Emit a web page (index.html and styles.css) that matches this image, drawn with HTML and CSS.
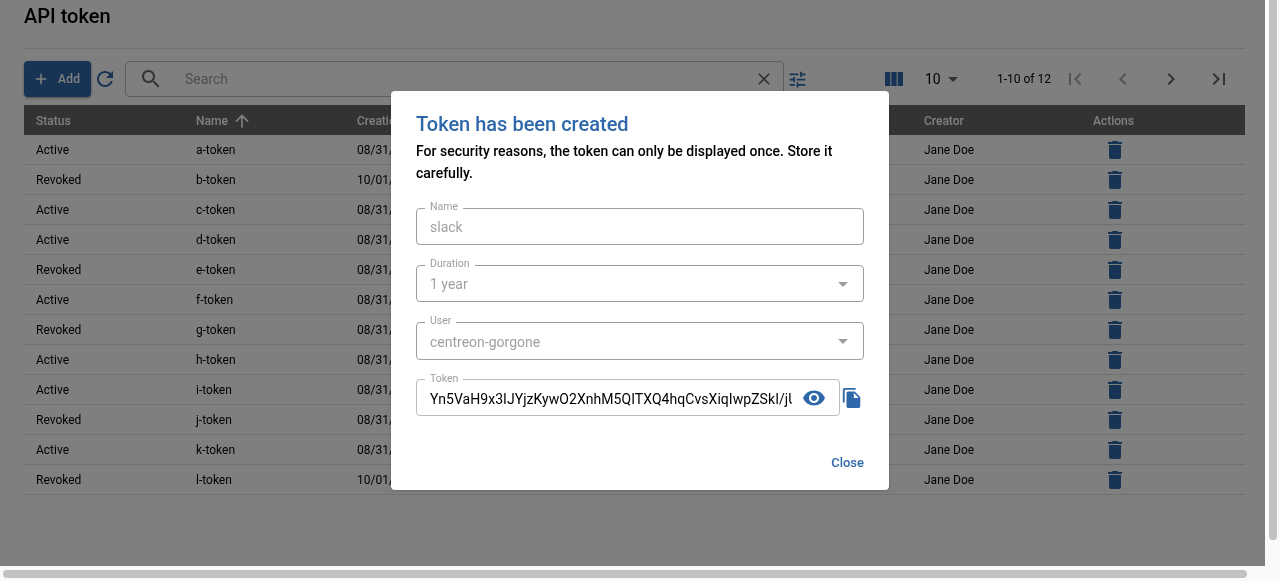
FILE: index.html
```html
<!DOCTYPE html>
<html lang="en">
<head>
    <meta charset="UTF-8">
    <meta name="viewport" content="width=device-width, initial-scale=1.0">
    <title>API token</title>
    <link rel="stylesheet" href="styles.css">
</head>
<body>
    <svg class="sprite" width="0" height="0">
        <symbol id="i-delete" viewBox="0 0 24 24"><path d="M6 19c0 1.1.9 2 2 2h8c1.1 0 2-.9 2-2V7H6v12zM19 4h-3.5l-1-1h-5l-1 1H5v2h14V4z"/></symbol>
        <symbol id="i-drop" viewBox="0 0 24 24"><path d="M7 10l5 5 5-5z"/></symbol>
    </svg>

    <main class="page">
        <h1 class="page-title">API token</h1>

        <div class="toolbar">
            <button class="add-btn" type="button">
                <svg class="icon-add" viewBox="0 0 24 24"><path d="M19 13h-6v6h-2v-6H5v-2h6V5h2v6h6v2z"/></svg>
                Add
            </button>
            <svg class="icon primary refresh" viewBox="0 0 24 24"><path d="M17.65 6.35C16.2 4.9 14.21 4 12 4c-4.42 0-7.99 3.58-7.99 8s3.57 8 7.99 8c3.73 0 6.84-2.55 7.73-6h-2.08c-.82 2.33-3.04 4-5.65 4-3.31 0-6-2.69-6-6s2.69-6 6-6c1.66 0 3.14.69 4.22 1.78L13 11h7V4l-2.35 2.35z"/></svg>
            <div class="search">
                <svg class="icon dark" viewBox="0 0 24 24"><path d="M15.5 14h-.79l-.28-.27C15.41 12.59 16 11.11 16 9.5 16 5.91 13.09 3 9.5 3S3 5.91 3 9.5 5.91 16 9.5 16c1.61 0 3.09-.59 4.23-1.57l.27.28v.79l5 4.99L20.49 19l-4.99-5zm-6 0C7.01 14 5 11.99 5 9.5S7.01 5 9.5 5 14 7.01 14 9.5 11.99 14 9.5 14z"/></svg>
                <span class="search-text">Search</span>
                <svg class="icon dark clear" viewBox="0 0 24 24"><path d="M19 6.41 17.59 5 12 10.59 6.41 5 5 6.41 10.59 12 5 17.59 6.41 19 12 13.41 17.59 19 19 17.59 13.41 12z"/></svg>
            </div>
            <svg class="icon primary tune" viewBox="0 0 24 24"><path d="M3 17v2h6v-2H3zM3 5v2h10V5H3zm10 16v-2h8v-2h-8v-2h-2v6h2zM7 9v2H3v2h4v2h2V9H7zm14 4v-2H11v2h10zm-6-4h2V7h4V5h-4V3h-2v6z"/></svg>
            <svg class="icon primary columns" viewBox="0 0 24 24"><path d="M14.67 5v14H9.33V5h5.34zm1 14H21V5h-5.33v14zm-7.34 0V5H3v14h5.33z"/></svg>
            <div class="page-size">10 <svg class="icon dark" viewBox="0 0 24 24"><use href="#i-drop"/></svg></div>
            <div class="page-count">1-10 of 12</div>
            <div class="pager">
                <svg class="icon muted" viewBox="0 0 24 24"><path d="M18.41 16.59 13.82 12l4.59-4.59L17 6l-6 6 6 6zM6 6h2v12H6z"/></svg>
                <svg class="icon muted" viewBox="0 0 24 24"><path d="M15.41 7.41 14 6l-6 6 6 6 1.41-1.41L10.83 12z"/></svg>
                <svg class="icon dark" viewBox="0 0 24 24"><path d="M10 6 8.59 7.41 13.17 12l-4.58 4.59L10 18l6-6z"/></svg>
                <svg class="icon dark" viewBox="0 0 24 24"><path d="M5.59 7.41 10.18 12l-4.59 4.59L7 18l6-6-6-6zM16 6h2v12h-2z"/></svg>
            </div>
        </div>

        <table class="token-table">
            <thead>
                <tr>
                    <th class="col-status">Status</th>
                    <th class="col-name">Name <svg class="sort-icon" viewBox="0 0 24 24"><path d="M4 12l1.41 1.41L11 7.83V20h2V7.83l5.58 5.59L20 12l-8-8-8 8z"/></svg></th>
                    <th>Creation date</th>
                    <th>Expiration date</th>
                    <th>User</th>
                    <th class="col-creator">Creator</th>
                    <th class="col-actions">Actions</th>
                </tr>
            </thead>
            <tbody>
                <tr><td>Active</td><td>a-token</td><td>08/31/2024</td><td>08/31/2025</td><td>John Doe</td><td>Jane Doe</td><td class="del"><svg class="icon primary" viewBox="0 0 24 24"><use href="#i-delete"/></svg></td></tr>
                <tr><td>Revoked</td><td>b-token</td><td>10/01/2024</td><td>10/01/2025</td><td>John Doe</td><td>Jane Doe</td><td class="del"><svg class="icon primary" viewBox="0 0 24 24"><use href="#i-delete"/></svg></td></tr>
                <tr><td>Active</td><td>c-token</td><td>08/31/2024</td><td>08/31/2025</td><td>John Doe</td><td>Jane Doe</td><td class="del"><svg class="icon primary" viewBox="0 0 24 24"><use href="#i-delete"/></svg></td></tr>
                <tr><td>Active</td><td>d-token</td><td>08/31/2024</td><td>08/31/2025</td><td>John Doe</td><td>Jane Doe</td><td class="del"><svg class="icon primary" viewBox="0 0 24 24"><use href="#i-delete"/></svg></td></tr>
                <tr><td>Revoked</td><td>e-token</td><td>08/31/2024</td><td>08/31/2025</td><td>John Doe</td><td>Jane Doe</td><td class="del"><svg class="icon primary" viewBox="0 0 24 24"><use href="#i-delete"/></svg></td></tr>
                <tr><td>Active</td><td>f-token</td><td>08/31/2024</td><td>08/31/2025</td><td>John Doe</td><td>Jane Doe</td><td class="del"><svg class="icon primary" viewBox="0 0 24 24"><use href="#i-delete"/></svg></td></tr>
                <tr><td>Revoked</td><td>g-token</td><td>08/31/2024</td><td>08/31/2025</td><td>John Doe</td><td>Jane Doe</td><td class="del"><svg class="icon primary" viewBox="0 0 24 24"><use href="#i-delete"/></svg></td></tr>
                <tr><td>Active</td><td>h-token</td><td>08/31/2024</td><td>08/31/2025</td><td>John Doe</td><td>Jane Doe</td><td class="del"><svg class="icon primary" viewBox="0 0 24 24"><use href="#i-delete"/></svg></td></tr>
                <tr><td>Active</td><td>i-token</td><td>08/31/2024</td><td>08/31/2025</td><td>John Doe</td><td>Jane Doe</td><td class="del"><svg class="icon primary" viewBox="0 0 24 24"><use href="#i-delete"/></svg></td></tr>
                <tr><td>Revoked</td><td>j-token</td><td>08/31/2024</td><td>08/31/2025</td><td>John Doe</td><td>Jane Doe</td><td class="del"><svg class="icon primary" viewBox="0 0 24 24"><use href="#i-delete"/></svg></td></tr>
                <tr><td>Active</td><td>k-token</td><td>08/31/2024</td><td>08/31/2025</td><td>John Doe</td><td>Jane Doe</td><td class="del"><svg class="icon primary" viewBox="0 0 24 24"><use href="#i-delete"/></svg></td></tr>
                <tr><td>Revoked</td><td>l-token</td><td>10/01/2024</td><td>10/01/2025</td><td>John Doe</td><td>Jane Doe</td><td class="del"><svg class="icon primary" viewBox="0 0 24 24"><use href="#i-delete"/></svg></td></tr>
            </tbody>
        </table>
    </main>

    <div class="backdrop">
        <div class="dialog">
            <h2 class="dialog-title">Token has been created</h2>
            <p class="dialog-text">For security reasons, the token can only be displayed once. Store it carefully.</p>

            <div class="field disabled">
                <span class="field-label">Name</span>
                <span class="field-value">slack</span>
            </div>
            <div class="field disabled">
                <span class="field-label">Duration</span>
                <span class="field-value">1 year</span>
                <svg class="icon drop" viewBox="0 0 24 24"><use href="#i-drop"/></svg>
            </div>
            <div class="field disabled field-tall">
                <span class="field-label">User</span>
                <span class="field-value">centreon-gorgone</span>
                <svg class="icon drop" viewBox="0 0 24 24"><use href="#i-drop"/></svg>
            </div>
            <div class="token-row">
                <div class="field token-field">
                    <span class="field-label">Token</span>
                    <span class="field-value token-value">Yn5VaH9x3IJYjzKywO2XnhM5QITXQ4hqCvsXiqIwpZSkI/jUqe8</span>
                    <svg class="icon blue" viewBox="0 0 24 24"><path d="M12 4.5C7 4.5 2.73 7.61 1 12c1.73 4.39 6 7.5 11 7.5s9.27-3.11 11-7.5c-1.73-4.39-6-7.5-11-7.5zM12 17c-2.76 0-5-2.24-5-5s2.24-5 5-5 5 2.24 5 5-2.24 5-5 5zm0-8c-1.66 0-3 1.34-3 3s1.34 3 3 3 3-1.34 3-3-1.34-3-3-3z"/></svg>
                </div>
                <svg class="icon blue copy" viewBox="0 0 24 24"><path d="M16 1H4c-1.1 0-2 .9-2 2v14h2V3h12V1zm-1 4 6 6v10c0 1.1-.9 2-2 2H7.99C6.89 23 6 22.1 6 21l.01-14c0-1.1.89-2 1.99-2h7zm-1 7h5.5L14 6.5V12z"/></svg>
            </div>

            <div class="dialog-actions">
                <button class="close-btn" type="button">Close</button>
            </div>
        </div>
    </div>

    <div class="scroll-v"><div class="thumb-v"></div></div>
    <div class="scroll-h"><div class="thumb-h"></div></div>
</body>
</html>
```

FILE: styles.css
```css
* {
    box-sizing: border-box;
}
html, body {
    height: 100%;
}
body {
    margin: 0;
    overflow: hidden;
    font-family: Roboto, "Liberation Sans", sans-serif;
    color: #000;
    background-color: #fff;
}
.sprite {
    display: block;
    height: 0;
}
.icon {
    display: block;
    flex: none;
    width: 24px;
    height: 24px;
    fill: currentColor;
}
.primary {
    color: #2e68aa;
}
.blue {
    color: #2e68aa;
}
.dark {
    color: #666;
}
.muted {
    color: #a8a8a8;
}

.page {
    width: 1265px;
    padding: 0 20px 0 24px;
    will-change: opacity;
}
.page-title {
    margin: 0;
    height: 49px;
    padding-top: 4px;
    font-size: 20px;
    font-weight: 500;
    line-height: 24px;
    border-bottom: 1px solid #e0e0e0;
}

.toolbar {
    display: flex;
    align-items: center;
    height: 36px;
    margin-top: 12px;
    margin-bottom: 8px;
}
.add-btn {
    display: flex;
    align-items: center;
    width: 67px;
    height: 36px;
    padding: 0 0 0 8px;
    border: none;
    border-radius: 4px;
    font-family: inherit;
    font-size: 12px;
    font-weight: 500;
    letter-spacing: 0.3px;
    color: #fff;
    background-color: #2e68aa;
    box-shadow: 0 1px 3px rgba(0,0,0,0.4);
}
.icon-add {
    width: 18px;
    height: 18px;
    margin-right: 8px;
    fill: #fff;
}
.refresh {
    margin: 0 8px 0 2px;
}
.search {
    display: flex;
    align-items: center;
    width: 659px;
    height: 36px;
    padding: 0 9px 0 13px;
    border: 1px solid #bbb;
    border-radius: 4px;
}
.search-text {
    flex: 1;
    padding-left: 22px;
    font-size: 14px;
    color: #9e9e9e;
}
.clear {
    width: 20px;
    height: 20px;
}
.tune {
    width: 21px;
    height: 21px;
    margin-left: 3px;
}
.columns {
    margin: 0 0 0 74px;
}
.page-size {
    display: flex;
    align-items: center;
    width: 41px;
    margin-left: 19px;
    font-size: 14px;
    color: #000;
}
.page-count {
    width: 60px;
    margin-left: 31px;
    font-size: 12px;
}
.pager {
    display: flex;
    gap: 24px;
    margin-left: 6px;
}

.token-table {
    width: 1221px;
    border-collapse: separate;
    border-spacing: 0;
    table-layout: fixed;
    font-size: 12px;
}
.token-table th {
    height: 30px;
    padding: 1px 12px 0;
    text-align: left;
    font-weight: 500;
    white-space: nowrap;
    color: #fff;
    background-color: #666;
}
.token-table td {
    height: 30px;
    padding: 0 12px;
    white-space: nowrap;
    border-bottom: 1px solid #e0e0e0;
}
.col-status {
    width: 160px;
}
.col-name {
    width: 161px;
}
.col-creator {
    width: 169px;
}
.col-actions {
    width: 164px;
}
.sort-icon {
    width: 20px;
    height: 20px;
    margin-left: 1px;
    vertical-align: -6px;
    fill: #fff;
}
.del .icon {
    margin-left: 10px;
}

.backdrop {
    position: fixed;
    inset: 0;
    display: flex;
    align-items: center;
    justify-content: center;
    background-color: rgba(0,0,0,0.5);
}
.dialog {
    width: 498px;
    height: 399px;
    padding: 20px 25px 0;
    border-radius: 4px;
    background-color: #fff;
    box-shadow: 0 1px 3px rgba(0,0,0,0.2);
    will-change: opacity;
}
.dialog-title {
    margin: 0;
    font-size: 20px;
    font-weight: 500;
    line-height: 26px;
    color: #2e68aa;
}
.dialog-text {
    margin: 3px 0 24px;
    font-size: 14px;
    font-weight: 500;
    line-height: 22px;
}
.field {
    position: relative;
    display: flex;
    align-items: center;
    justify-content: space-between;
    height: 37px;
    margin-bottom: 20px;
    padding: 0 8px 0 13px;
    border: 1px solid #bdbdbd;
    border-radius: 4px;
    font-size: 14px;
}
.field.disabled {
    border-color: #9e9e9e;
    color: #a0a0a0;
}
.field-tall {
    height: 38px;
    margin-bottom: 19px;
}
.field-tall .field-value, .token-value {
    padding-top: 2px;
}
.field-label {
    position: absolute;
    top: -8px;
    left: 8px;
    padding: 0 5px;
    font-size: 10.5px;
    line-height: 12px;
    color: #9e9e9e;
    background-color: #fff;
}
.token-field .field-label {
    top: -7px;
}
.drop {
    color: #9e9e9e;
}
.token-row {
    display: flex;
    align-items: center;
    gap: 1px;
}
.token-field {
    width: 424px;
    margin-bottom: 0;
    padding-right: 13px;
}
.token-value {
    flex: none;
    width: 362px;
    overflow: hidden;
    white-space: nowrap;
    letter-spacing: 0.05px;
    color: #000;
}
.copy {
    width: 22px;
    height: 22px;
}
.dialog-actions {
    display: flex;
    justify-content: flex-end;
    margin-top: 39px;
}
.close-btn {
    padding: 0;
    border: none;
    font-family: inherit;
    font-size: 13px;
    font-weight: 500;
    color: #2e68aa;
    background: none;
}

/* browser scrollbars seen in the shot */
.scroll-v {
    position: fixed;
    top: 0;
    right: 0;
    bottom: 0;
    width: 15px;
    background-color: #fafafa;
}
.thumb-v {
    width: 8px;
    height: 540px;
    margin-left: 4px;
    border-radius: 0 0 4px 4px;
    background-color: #c1c1c1;
}
.scroll-h {
    position: fixed;
    left: 0;
    right: 15px;
    bottom: 0;
    height: 15px;
    padding: 4px 0 0 3px;
    background-color: #fafafa;
}
.thumb-h {
    width: 1244px;
    height: 8px;
    border-radius: 4px;
    background-color: #c1c1c1;
}
```
